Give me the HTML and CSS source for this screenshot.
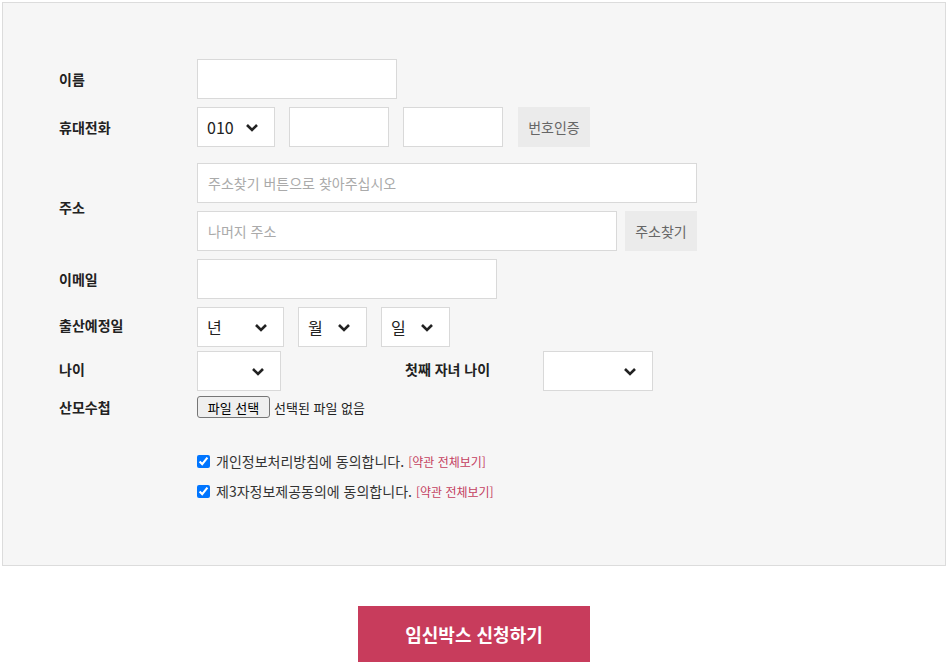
FILE: index.html
```html
<!DOCTYPE html>
<html lang="ko">
<head>
<meta charset="utf-8">
<title>임신박스 신청</title>
<link rel="stylesheet" href="styles.css">
</head>
<body>
<div class="page">
  <form class="panel">
    <div class="row">
      <label class="label">이름</label>
      <div class="fields"><input class="input w200" type="text"></div>
    </div>
    <div class="row">
      <label class="label">휴대전화</label>
      <div class="fields">
        <div class="select w78"><span>010</span><svg class="chev" width="14" height="9" viewBox="0 0 14 9"><path d="M2 2 L7 7 L12 2" fill="none" stroke="#222" stroke-width="2.6"/></svg></div>
        <input class="input w100 ml14" type="text">
        <input class="input w100 ml14" type="text">
        <button type="button" class="gbtn ml15">번호인증</button>
      </div>
    </div>
    <div class="row addr">
      <label class="label">주소</label>
      <div class="fields col">
        <input class="input w500" type="text" placeholder="주소찾기 버튼으로 찾아주십시오">
        <div class="line">
          <input class="input w420" type="text" placeholder="나머지 주소">
          <button type="button" class="gbtn ml8">주소찾기</button>
        </div>
      </div>
    </div>
    <div class="row">
      <label class="label">이메일</label>
      <div class="fields"><input class="input w300" type="text"></div>
    </div>
    <div class="row">
      <label class="label up">출산예정일</label>
      <div class="fields">
        <div class="select w87"><span>년</span><svg class="chev" width="14" height="9" viewBox="0 0 14 9"><path d="M2 2 L7 7 L12 2" fill="none" stroke="#222" stroke-width="2.6"/></svg></div>
        <div class="select w69 ml14"><span>월</span><svg class="chev" width="14" height="9" viewBox="0 0 14 9"><path d="M2 2 L7 7 L12 2" fill="none" stroke="#222" stroke-width="2.6"/></svg></div>
        <div class="select w69 ml14"><span>일</span><svg class="chev" width="14" height="9" viewBox="0 0 14 9"><path d="M2 2 L7 7 L12 2" fill="none" stroke="#222" stroke-width="2.6"/></svg></div>
      </div>
    </div>
    <div class="row age">
      <div class="half">
        <label class="label up">나이</label>
        <div class="select w84"><span></span><svg class="chev" width="14" height="9" viewBox="0 0 14 9"><path d="M2 2 L7 7 L12 2" fill="none" stroke="#222" stroke-width="2.6"/></svg></div>
      </div>
      <div class="half">
        <label class="label up">첫째 자녀 나이</label>
        <div class="select w110"><span></span><svg class="chev" width="14" height="9" viewBox="0 0 14 9"><path d="M2 2 L7 7 L12 2" fill="none" stroke="#222" stroke-width="2.6"/></svg></div>
      </div>
    </div>
    <div class="row file">
      <label class="label">산모수첩</label>
      <div class="fields">
        <button type="button" class="filebtn">파일 선택</button>
        <span class="filetext">선택된 파일 없음</span>
      </div>
    </div>
    <div class="agree">
      <label class="check"><input type="checkbox" checked><span>개인정보처리방침에 동의합니다.</span><a class="terms">[약관 전체보기]</a></label>
      <label class="check"><input type="checkbox" checked><span>제3자정보제공동의에 동의합니다.</span><a class="terms">[약관 전체보기]</a></label>
    </div>
  </form>
  <div class="submit-wrap">
    <button type="button" class="submit">임신박스 신청하기</button>
  </div>
</div>
</body>
</html>
```

FILE: styles.css
```css
* { box-sizing: border-box; }
html, body { margin: 0; padding: 0; background: #fff; }
body {
  font-family: "Noto Sans CJK KR", "Noto Sans", sans-serif;
  color: #222;
  font-size: 14px;
}
.page { padding: 2px 3px 0 2px; }
.panel {
  background: #f6f6f6;
  border: 1px solid #dcdcdc;
  padding: 56px 0 63px 56px;
  display: flex;
  flex-direction: column;
}
.row { display: flex; align-items: center; margin-bottom: 8px; }
.row.addr { margin-top: 8px; }
.row.age { margin-top: -4px; margin-bottom: 5px; }
.label {
  width: 138px;
  flex: none;
  font-weight: 700;
  font-size: 14px;
  color: #222;
  line-height: 20px;
}
.label.up { margin-bottom: 4px; }
.fields { display: flex; align-items: center; }
.fields.col { flex-direction: column; align-items: flex-start; gap: 8px; }
.line { display: flex; align-items: center; }
.input {
  height: 40px;
  border: 1px solid #d9d9d9;
  background: #fff;
  padding: 0 10px;
  font-family: inherit;
  font-size: 14px;
  color: #222;
  outline: none;
}
.input::placeholder { color: #aaa; }
.w200 { width: 200px; }
.w100 { width: 100px; }
.w500 { width: 500px; }
.w420 { width: 420px; }
.w300 { width: 300px; }
.w78 { width: 78px; }
.w87 { width: 87px; }
.w69 { width: 69px; }
.w84 { width: 84px; }
.w110 { width: 110px; }
.ml14 { margin-left: 14px; }
.ml15 { margin-left: 15px; }
.ml8 { margin-left: 8px; }
.select {
  height: 40px;
  border: 1px solid #d9d9d9;
  background: #fff;
  display: flex;
  align-items: center;
  justify-content: space-between;
  padding: 0 15px 0 9px;
  font-size: 16px;
  color: #222;
  flex: none;
}
.chev { display: block; }
.gbtn {
  height: 40px;
  width: 72px;
  border: none;
  background: #ebebeb;
  color: #666;
  font-family: inherit;
  font-size: 14px;
  padding: 0;
}
.half { display: flex; align-items: center; width: 346px; }
.filebtn {
  height: 22px;
  width: 73px;
  padding: 0;
  background: #efefef;
  border: 1px solid #767676;
  border-radius: 3px;
  font-family: inherit;
  font-size: 13px;
  color: #000;
}
.filetext { margin-left: 4px; font-size: 13px; color: #222; }
.agree {
  margin-top: 25px;
  margin-left: 138px;
  display: flex;
  flex-direction: column;
  gap: 9px;
}
.check {
  display: flex;
  align-items: center;
  font-size: 14px;
  color: #333;
  line-height: 21px;
}
.check input {
  width: 13px;
  height: 13px;
  margin: 0 6px 0 0;
}
.terms { color: #c4405f; font-size: 12px; margin-left: 4px; }
.submit-wrap { display: flex; justify-content: center; padding-top: 40px; }
.submit {
  width: 232px;
  height: 56px;
  background: #c83c5c;
  color: #fff;
  border: none;
  font-family: inherit;
  font-weight: 700;
  font-size: 18px;
}
```
